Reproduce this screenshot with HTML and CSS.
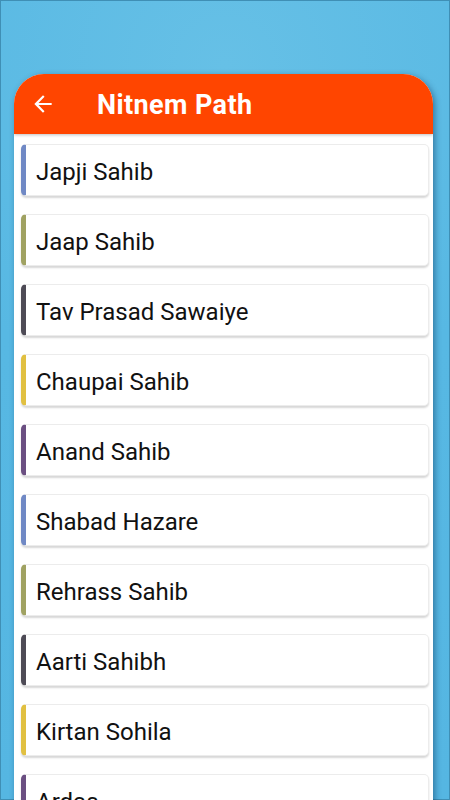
FILE: index.html
```html
<!DOCTYPE html>
<html>
<head>
<meta charset="utf-8">
<link rel="stylesheet" href="styles.css">
</head>
<body>
<div class="screen">
  <div class="panel">
    <div class="header">
      <svg class="back" width="26" height="26" viewBox="0 0 24 24"><path d="M20 11H7.83l5.59-5.59L12 4l-8 8 8 8 1.41-1.41L7.83 13H20v-2z" fill="#fff"/></svg>
      <span class="title">Nitnem Path</span>
    </div>
    <div class="list">
      <div class="card c1">Japji Sahib</div>
      <div class="card c2">Jaap Sahib</div>
      <div class="card c3">Tav Prasad Sawaiye</div>
      <div class="card c4">Chaupai Sahib</div>
      <div class="card c5">Anand Sahib</div>
      <div class="card c1">Shabad Hazare</div>
      <div class="card c2">Rehrass Sahib</div>
      <div class="card c3">Aarti Sahibh</div>
      <div class="card c4">Kirtan Sohila</div>
      <div class="card c5">Ardas</div>
    </div>
  </div>
</div>
</body>
</html>
```
FILE: styles.css
```css
html, body {
  margin: 0;
  padding: 0;
  height: 100%;
  overflow: hidden;
}
body {
  font-family: Roboto, "Liberation Sans", sans-serif;
}
.screen {
  width: 450px;
  height: 800px;
  box-sizing: border-box;
  padding: 74px 17px 0 14px;
  background: radial-gradient(circle at 50% 8%, #66c0e6 0%, #57b8e3 45%, #55b6e2 100%);
  box-shadow: inset 0 0 0 1px #3f8fb5;
  overflow: hidden;
}
.panel {
  height: 800px;
  border-radius: 30px 30px 0 0;
  background: #fff;
  box-shadow: 2px 2px 6px rgba(0, 40, 80, 0.45);
  overflow: hidden;
}
.header {
  height: 60px;
  background: #ff4500;
  display: flex;
  align-items: center;
  padding-left: 16px;
  box-shadow: 0 1px 3px rgba(0, 0, 0, 0.25);
  position: relative;
}
.back {
  display: block;
}
.title {
  margin-left: 41px;
  color: #fff;
  font-size: 27px;
  font-weight: 700;
  letter-spacing: 0.4px;
  padding-top: 1px;
}
.list {
  padding: 10px 4px 0 7px;
  display: flex;
  flex-direction: column;
  gap: 18px;
}
.card {
  height: 52px;
  box-sizing: border-box;
  border-radius: 5px;
  border: 1px solid #ececec;
  border-left: 5px solid #7089c5;
  background: #fff;
  box-shadow: 0 2px 2px rgba(0, 0, 0, 0.16);
  display: flex;
  align-items: center;
  padding-left: 10px;
  padding-top: 3px;
  font-size: 24px;
  color: #111;
}
.c1 { border-left-color: #7089c5; }
.c2 { border-left-color: #a0a262; }
.c3 { border-left-color: #4e4b56; }
.c4 { border-left-color: #e1c041; }
.c5 { border-left-color: #6b4f82; }
```
